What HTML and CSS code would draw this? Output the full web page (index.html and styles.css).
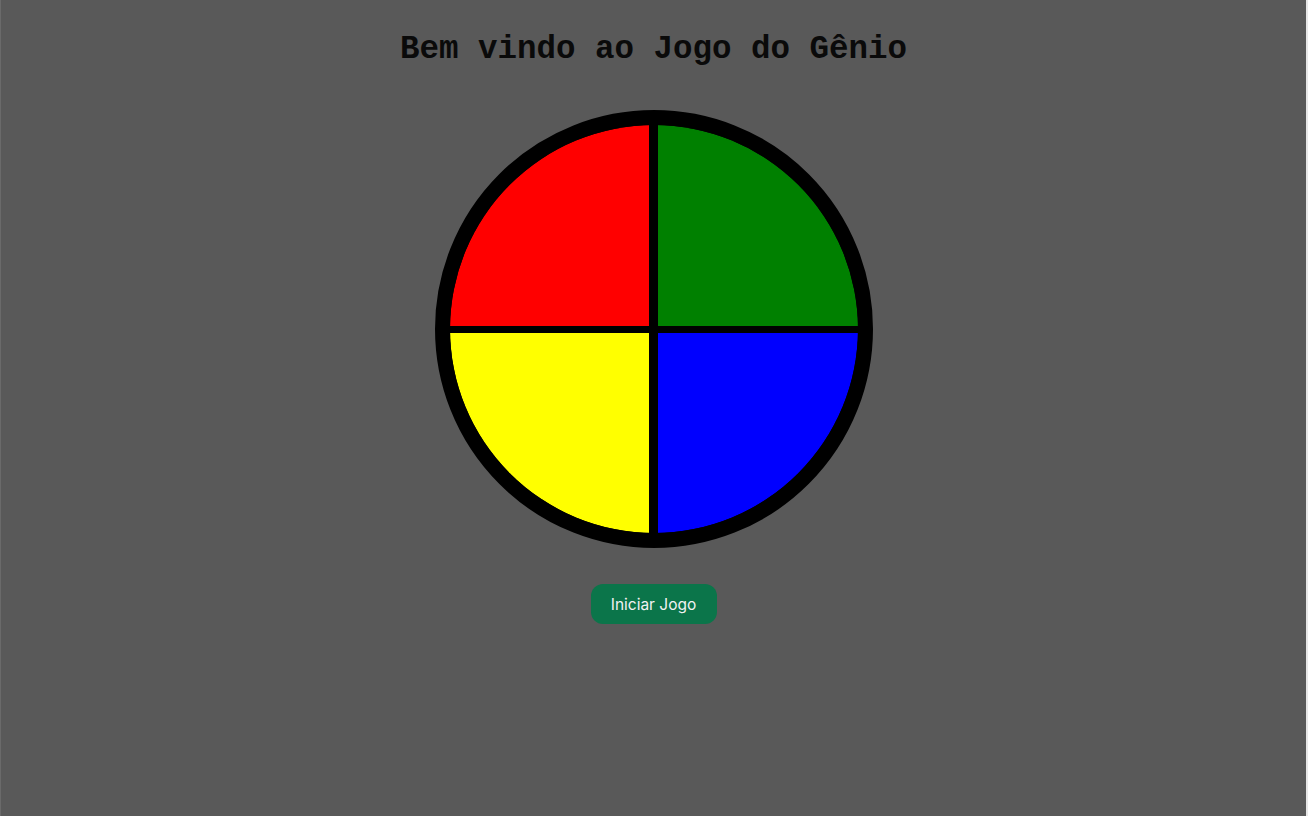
FILE: index.html
```html
<!DOCTYPE html>
<html lang="pt-BR">
<head>
<meta charset="utf-8">
<title>Jogo do Gênio</title>
<link rel="stylesheet" href="styles.css">
</head>
<body>
<main class="page">
  <h1 class="title">Bem vindo ao Jogo do Gênio</h1>
  <div class="genius">
    <div class="board">
      <div class="pad red"></div>
      <div class="pad green"></div>
      <div class="pad yellow"></div>
      <div class="pad blue"></div>
    </div>
  </div>
  <button class="start">Iniciar Jogo</button>
</main>
</body>
</html>
```
FILE: styles.css
```css
html, body {
  margin: 0;
  padding: 0;
  height: 100%;
}
body {
  background: #595959;
}
.page {
  display: flex;
  flex-direction: column;
  align-items: center;
  min-height: 100%;
  box-sizing: border-box;
  border-left: 1px solid #6a6a6a;
  border-right: 2px solid #e8e8e8;
}
.title {
  font-family: "Liberation Mono", "Courier New", monospace;
  font-weight: bold;
  font-size: 32.5px;
  line-height: 38px;
  color: #0a0a0a;
  margin: 31px 0 0 0;
}
.genius {
  margin-top: 41px;
  width: 438px;
  height: 438px;
  box-sizing: border-box;
  border: 15px solid #000;
  border-radius: 50%;
  background: #000;
  overflow: hidden;
}
.board {
  width: 100%;
  height: 100%;
  display: grid;
  grid-template-columns: 199px 200px;
  grid-template-rows: 201px 200px;
  column-gap: 9px;
  row-gap: 7px;
  border-radius: 50%;
  overflow: hidden;
}
.red { background: #ff0000; }
.green { background: #008000; }
.yellow { background: #ffff00; }
.blue { background: #0000ff; }
.start {
  margin-top: 36px;
  width: 126px;
  height: 40px;
  border: none;
  border-radius: 12px;
  background: #0b754a;
  color: #f2f2f2;
  font-family: Inter, "Noto Sans", sans-serif;
  font-size: 15.5px;
  cursor: pointer;
}
```
